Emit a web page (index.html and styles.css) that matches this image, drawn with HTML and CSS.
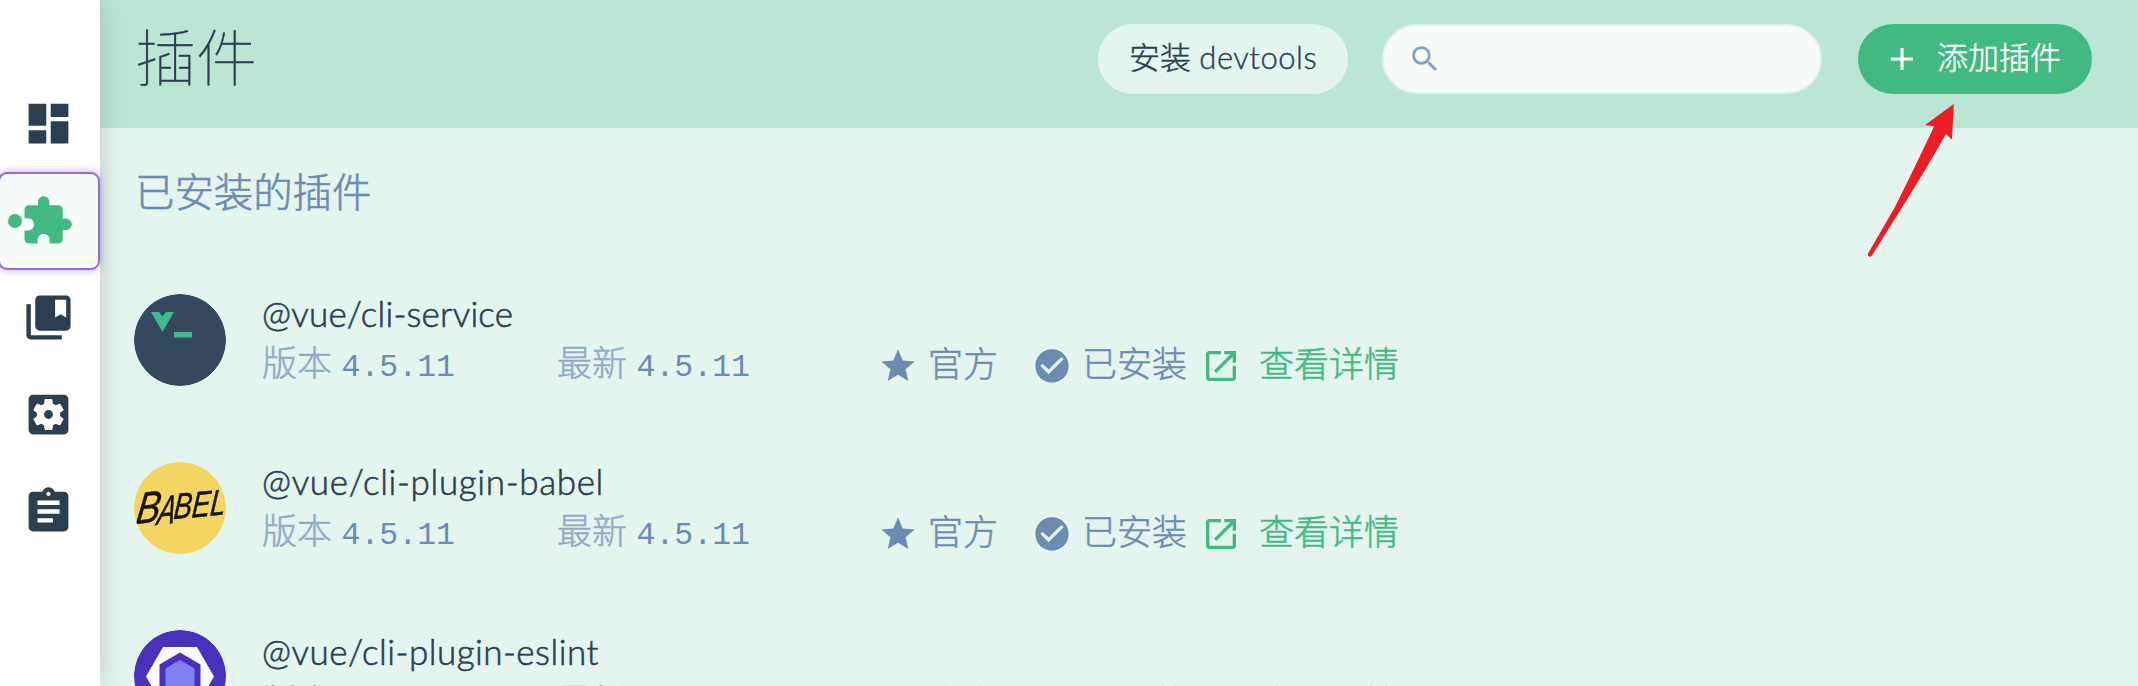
FILE: index.html
```html
<!DOCTYPE html>
<html lang="zh-CN">
<head>
<meta charset="utf-8">
<title>插件</title>
<link rel="stylesheet" href="styles.css">
</head>
<body>
<svg class="sprite" aria-hidden="true">
  <symbol id="star" viewBox="0 0 24 24"><path d="M12 17.27L18.18 21l-1.64-7.03L22 9.24l-7.19-.61L12 2 9.19 8.63 2 9.24l5.46 4.73L5.82 21z"/></symbol>
  <symbol id="check" viewBox="0 0 24 24"><path d="M12 2C6.48 2 2 6.48 2 12s4.48 10 10 10 10-4.48 10-10S17.52 2 12 2zm-2 15l-5-5 1.41-1.41L10 14.17l7.59-7.59L19 8l-9 9z"/></symbol>
  <symbol id="open" viewBox="0 0 24 24"><path d="M19 19H5V5h7V3H5c-1.11 0-2 .9-2 2v14c0 1.1.89 2 2 2h14c1.1 0 2-.9 2-2v-7h-2v7zM14 3v2h3.59l-9.83 9.83 1.41 1.41L19 6.41V10h2V3h-7z"/></symbol>
</svg>
<div class="app">
  <nav class="sidebar">
    <a class="nav-item"><svg viewBox="0 0 24 24"><path d="M3 13h8V3H3v10zm0 8h8v-6H3v6zm10 0h8V11h-8v10zm0-18v6h8V3h-8z"/></svg></a>
    <a class="nav-item active"><svg viewBox="0 0 24 24"><path d="M20.5 11H19V7c0-1.1-.9-2-2-2h-4V3.5C13 2.12 11.88 1 10.5 1S8 2.12 8 3.5V5H4c-1.1 0-1.99.9-1.99 2v3.8H3.5c1.49 0 2.7 1.21 2.7 2.7s-1.21 2.7-2.7 2.7H2V20c0 1.1.9 2 2 2h3.8v-1.5c0-1.49 1.21-2.7 2.7-2.7 1.49 0 2.7 1.21 2.7 2.7V22H17c1.1 0 2-.9 2-2v-4h1.5c1.38 0 2.5-1.12 2.5-2.5S21.88 11 20.5 11z"/></svg></a>
    <a class="nav-item"><svg viewBox="0 0 24 24"><path d="M4 6H2v14c0 1.1.9 2 2 2h14v-2H4V6z"/><path d="M20 2H8c-1.1 0-2 .9-2 2v12c0 1.1.9 2 2 2h12c1.1 0 2-.9 2-2V4c0-1.1-.9-2-2-2zm0 10l-2.5-1.5L15 12V4h5v8z"/></svg></a>
    <a class="nav-item"><svg viewBox="0 0 24 24"><path d="M12 10c-1.1 0-2 .9-2 2s.9 2 2 2 2-.9 2-2-.9-2-2-2zm7-7H5c-1.11 0-2 .9-2 2v14c0 1.1.89 2 2 2h14c1.11 0 2-.9 2-2V5c0-1.1-.89-2-2-2zm-1.75 9c0 .23-.02.46-.05.68l1.48 1.16c.13.11.17.3.08.45l-1.4 2.42c-.09.15-.27.21-.43.15l-1.74-.7c-.36.28-.76.51-1.18.69l-.26 1.85c-.03.17-.18.3-.35.3h-2.8c-.17 0-.32-.13-.35-.29l-.26-1.85c-.43-.18-.82-.41-1.18-.69l-1.74.7c-.16.06-.34 0-.43-.15l-1.4-2.42c-.09-.15-.05-.34.08-.45l1.48-1.16c-.03-.23-.05-.46-.05-.69 0-.23.02-.46.05-.68l-1.48-1.16c-.13-.11-.17-.3-.08-.45l1.4-2.42c.09-.15.27-.21.43-.15l1.74.7c.36-.28.76-.51 1.18-.69l.26-1.85c.03-.17.18-.3.35-.3h2.8c.17 0 .32.13.35.29l.26 1.85c.43.18.82.41 1.18.69l1.74-.7c.16-.06.34 0 .43.15l1.4 2.42c.09.15.05.34-.08.45l-1.48 1.16c.03.23.05.46.05.69z"/></svg></a>
    <a class="nav-item"><svg viewBox="0 0 24 24"><path d="M19 3h-4.180C14.400 1.840 13.300 1 12 1c-1.300 0-2.400.84-2.820 2H5c-1.100 0-2 .9-2 2v14c0 1.100.9 2 2 2h14c1.100 0 2-.9 2-2V5c0-1.100-.9-2-2-2zm-7 0c.55 0 1 .45 1 1s-.45 1-1 1-1-.45-1-1 .45-1 1-1zm2 14H7v-2h7v2zm3-4H7v-2h10v2zm0-4H7V7h10v2z"/></svg></a>
  </nav>
  <main class="main">
    <header class="header">
      <h1 class="title">插件</h1>
      <button class="btn devtools">安装 <span class="latin">devtools</span></button>
      <div class="search"><svg viewBox="0 0 24 24"><path d="M15.500 14h-.79l-.28-.27C15.410 12.590 16 11.110 16 9.500 16 5.910 13.090 3 9.500 3S3 5.910 3 9.500 5.910 16 9.500 16c1.610 0 3.090-.59 4.230-1.570l.27.28v.79l5 4.990L20.490 19l-4.990-5zm-6 0C7.010 14 5 11.990 5 9.500S7.010 5 9.500 5 14 7.010 14 9.500 11.990 14 9.500 14z"/></svg></div>
      <button class="btn add"><svg viewBox="0 0 24 24"><path d="M19 13h-6v6h-2v-6H5v-2h6V5h2v6h6v2z"/></svg>添加插件</button>
    </header>
    <h2 class="subtitle">已安装的插件</h2>
    <ul class="list">
      <li class="plugin service">
        <svg class="avatar" viewBox="0 0 92 92"><circle cx="46" cy="46" r="46" fill="#35495e"/><path d="M17 18h8l3.500 4.500 3.500-4.500h8L28.500 38z" fill="#41b98d"/><path d="M40 38h18v5.500H40z" fill="#41b98d"/></svg>
        <div class="info">
          <div class="name">@vue/cli-service</div>
          <div class="meta">
            <span class="ver">版本 <b>4.5.11</b></span><span class="ver">最新 <b>4.5.11</b></span>
            <span class="tag official"><svg><use href="#star"/></svg>官方</span>
            <span class="tag installed"><svg><use href="#check"/></svg>已安装</span>
            <a class="tag link"><svg><use href="#open"/></svg>查看详情</a>
          </div>
        </div>
      </li>
      <li class="plugin">
        <svg class="avatar" viewBox="0 0 92 92"><circle cx="46" cy="46" r="46" fill="#f3d662"/><g class="babel"><text transform="translate(1 62) rotate(-6) skewX(-14)" font-size="44" textLength="24" lengthAdjust="spacingAndGlyphs">B</text><text transform="translate(22 63) rotate(-6) skewX(-16)" font-size="40" textLength="18" lengthAdjust="spacingAndGlyphs">A</text><text transform="translate(39 57) rotate(-5) skewX(-10)" font-size="36" textLength="52" lengthAdjust="spacingAndGlyphs">BEL</text></g></svg>
        <div class="info">
          <div class="name">@vue/cli-plugin-babel</div>
          <div class="meta">
            <span class="ver">版本 <b>4.5.11</b></span><span class="ver">最新 <b>4.5.11</b></span>
            <span class="tag official"><svg><use href="#star"/></svg>官方</span>
            <span class="tag installed"><svg><use href="#check"/></svg>已安装</span>
            <a class="tag link"><svg><use href="#open"/></svg>查看详情</a>
          </div>
        </div>
      </li>
      <li class="plugin last">
        <svg class="avatar" viewBox="0 0 92 92"><circle cx="46" cy="46" r="46" fill="#4930bd"/><g class="soft"><path d="M29 17h34l17 29.500-17 29.500H29L12 46.500z" fill="#fff"/><path d="M46 22.500l20.500 12v24L46 70 25.500 58.500v-24z" fill="#4930bd"/><path d="M46 30l14.500 8.500v17L46 64l-14.500-8.500v-17z" fill="#8080f2"/></g></svg>
        <div class="info">
          <div class="name">@vue/cli-plugin-eslint</div>
          <div class="meta">
            <span class="ver">版本 <b>4.5.11</b></span><span class="ver">最新 <b>4.5.11</b></span>
            <span class="tag official"><svg><use href="#star"/></svg>官方</span>
            <span class="tag installed"><svg><use href="#check"/></svg>已安装</span>
            <a class="tag link"><svg><use href="#open"/></svg>查看详情</a>
          </div>
        </div>
      </li>
    </ul>
  </main>
  <svg class="arrow" viewBox="0 0 90 156"><path d="M86.800 1L58 22l9.200 1.200Q48 64 28 104L1 150.500q-.6 2.500 1.200 3 2 .6 3-1.500L36 103Q58 68 79 31l6 5.500z"/></svg>
</div>
</body>
</html>
```
FILE: styles.css
```css
* { box-sizing: border-box; }
body { margin: 0; font-family: Lato, "Noto Sans CJK SC", sans-serif; color: #2c3e50; }
.sprite { display: none; }
.app { display: flex; position: relative; width: 2138px; height: 686px; overflow: hidden; background: #e4f4ee; }
.sidebar { width: 100px; height: 686px; padding-top: 75px; background: #fff; box-shadow: 0 0 26px rgba(0,0,0,.16); z-index: 1; flex: none; }
.nav-item { display: flex; align-items: center; justify-content: center; height: 97px; padding-right: 4px; position: relative; }
.nav-item svg { width: 53px; height: 53px; fill: #2c3e50; }
.nav-item.active { height: 98px; margin: 0 0 -1px -2px; padding-right: 4px; border: 2px solid #9f66d8; border-radius: 9px; background: #f6fcfa; box-shadow: 0 0 9px rgba(145,80,210,.5); }
.nav-item.active svg { fill: #42b983; width: 54px; height: 54px; }
.nav-item.active::before { content: ""; position: absolute; left: 8px; top: 40px; width: 14px; height: 14px; border-radius: 50%; background: #42b983; }
.main { flex: 1; min-width: 0; }
.header { display: flex; align-items: flex-start; height: 128px; padding: 24px 46px 0 34px; background: #bbe6d6; }
.title { margin: -10px auto 0 1px; font-size: 61px; line-height: 88px; font-weight: 100; -webkit-text-stroke: .3px currentColor; }
.btn { display: flex; align-items: center; justify-content: center; height: 70px; border: 0; border-radius: 35px; padding: 0 0 3px; font: 300 31px/67px Lato, "Noto Sans CJK SC", sans-serif; color: #2c3e50; white-space: pre; -webkit-text-stroke: .4px currentColor; }
.devtools { width: 250px; background: #e4f4ee; }
.latin { letter-spacing: .5px; }
.search { width: 440px; height: 70px; margin: 0 36px 0 34px; border: 2px solid #e0f4ec; border-radius: 35px; background: #f7fbfa; padding: 16px 0 0 24px; }
.search svg { width: 34px; height: 34px; fill: #84a2c2; }
.add { width: 234px; background: #42b983; color: #fff; justify-content: flex-start; padding-left: 25px; }
.add svg { width: 38px; height: 38px; fill: #fff; margin: 2px 16px 0 0; stroke: none; }
.subtitle { margin: 34px 0 0 35px; font-size: 39.4px; line-height: 59px; font-weight: 300; color: #6b8bb0; -webkit-text-stroke: .6px currentColor; }
.list { list-style: none; margin: 0; padding: 73px 0 0 34px; }
.plugin { display: flex; height: 168px; }
.avatar { width: 92px; height: 92px; flex: none; margin-right: 36px; border-radius: 50%; }
.babel { font-family: "Liberation Sans", sans-serif; font-weight: 400; font-style: italic; fill: #15130a; stroke: #15130a; stroke-width: .5px; filter: blur(.7px); }
.soft { filter: blur(.6px); }
.name { margin-top: -2px; font-size: 35px; line-height: 42px; font-weight: 300; letter-spacing: .65px; white-space: nowrap; -webkit-text-stroke: .6px currentColor; }
.service .name { letter-spacing: .2px; }
.last .name { letter-spacing: .47px; }
.meta { display: flex; align-items: center; height: 60px; font-size: 35px; line-height: 56px; font-weight: 300; color: #8fabc5; white-space: nowrap; -webkit-text-stroke: .5px currentColor; }
.ver { width: 295px; padding-top: 2px; }
.ver b { font: 400 31.500px/56px "Liberation Mono", monospace; color: #6b8bb0; -webkit-text-stroke: 0; }
.tag { display: flex; align-items: center; color: #6b8bb0; height: 56px; line-height: 52px; padding-bottom: 2px; }
.tag svg { width: 40px; height: 40px; fill: currentColor; margin: 5px 10px 0 0; stroke: none; }
.official { margin-left: 26px; width: 154px; }
.installed { width: 169px; }
.tag.link { color: #42b983; }
.link svg { margin-right: 18px; }
.last .info { padding-top: 2px; }
.last .meta { padding-top: 2px; }
.arrow { position: absolute; left: 1867px; top: 103px; width: 90px; height: 156px; fill: #ee1c24; z-index: 2; }
```
